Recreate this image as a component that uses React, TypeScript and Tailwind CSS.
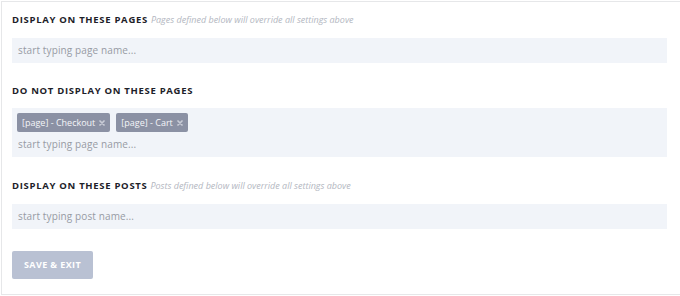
import React from 'react';

const font = { fontFamily: '"Open Sans", "Liberation Sans", sans-serif' };

const Heading: React.FC<{ title: string; hint?: string; className?: string }> = ({ title, hint, className }) => (
  <div className={`flex items-baseline h-[14px] leading-[14px] ${className || ''}`}>
    <span className="text-[9.5px] font-bold tracking-[0.7px] text-[#1d2129] uppercase">{title}</span>
    {hint && <span className="ml-[3px] text-[9px] italic text-[#b3b7c1]">{hint}</span>}
  </div>
);

const Tag: React.FC<{ label: string }> = ({ label }) => (
  <span className="flex items-center h-[19px] pl-[5px] pr-[5px] rounded-[2px] bg-[#8b91a4] text-[9px] text-[#f4f5f8]">
    {label}
    <svg className="ml-[4px]" width="6" height="6" viewBox="0 0 6 6">
      <path d="M1 1 L5 5 M5 1 L1 5" stroke="#c9ccd6" strokeWidth="1.7" strokeLinecap="round" />
    </svg>
  </span>
);

export default function App() {
  return (
    <div className="w-[680px] h-[296px] bg-white overflow-hidden" style={font}>
      <div className="mt-px ml-px border-t border-l border-b border-[#e6e7e9] h-[294px] pl-[10px] pr-[13px] pt-[11px]">
        <Heading title="Display on these pages" hint="Pages defined below will override all settings above" />
        <div className="mt-[11px] h-[25px] bg-[#f1f4f9] flex items-center px-[6px] text-[10px] tracking-[0.12px] text-[#979ba4]">
          start typing page name...
        </div>

        <Heading title="Do not display on these pages" className="mt-[21px]" />
        <div className="mt-[10px] h-[49px] bg-[#f1f4f9] pt-[5px] px-[5px]">
          <div className="flex gap-[6px]">
            <Tag label="[page] - Checkout" />
            <Tag label="[page] - Cart" />
          </div>
          <div className="mt-[4px] pl-px h-[16px] leading-[16px] text-[10px] tracking-[0.12px] text-[#979ba4]">
            start typing page name...
          </div>
        </div>

        <Heading title="Display on these posts" hint="Posts defined below will override all settings above" className="mt-[22px]" />
        <div className="mt-[11px] h-[25px] bg-[#f1f4f9] flex items-center px-[6px] text-[10px] tracking-[0.12px] text-[#979ba4]">
          start typing post name...
        </div>

        <button className="mt-[22px] w-[81px] h-[28px] rounded-[2px] bg-[#b9c1d3] text-white text-[9px] font-bold tracking-[0.4px] uppercase">
          Save &amp; Exit
        </button>
      </div>
    </div>
  );
}
